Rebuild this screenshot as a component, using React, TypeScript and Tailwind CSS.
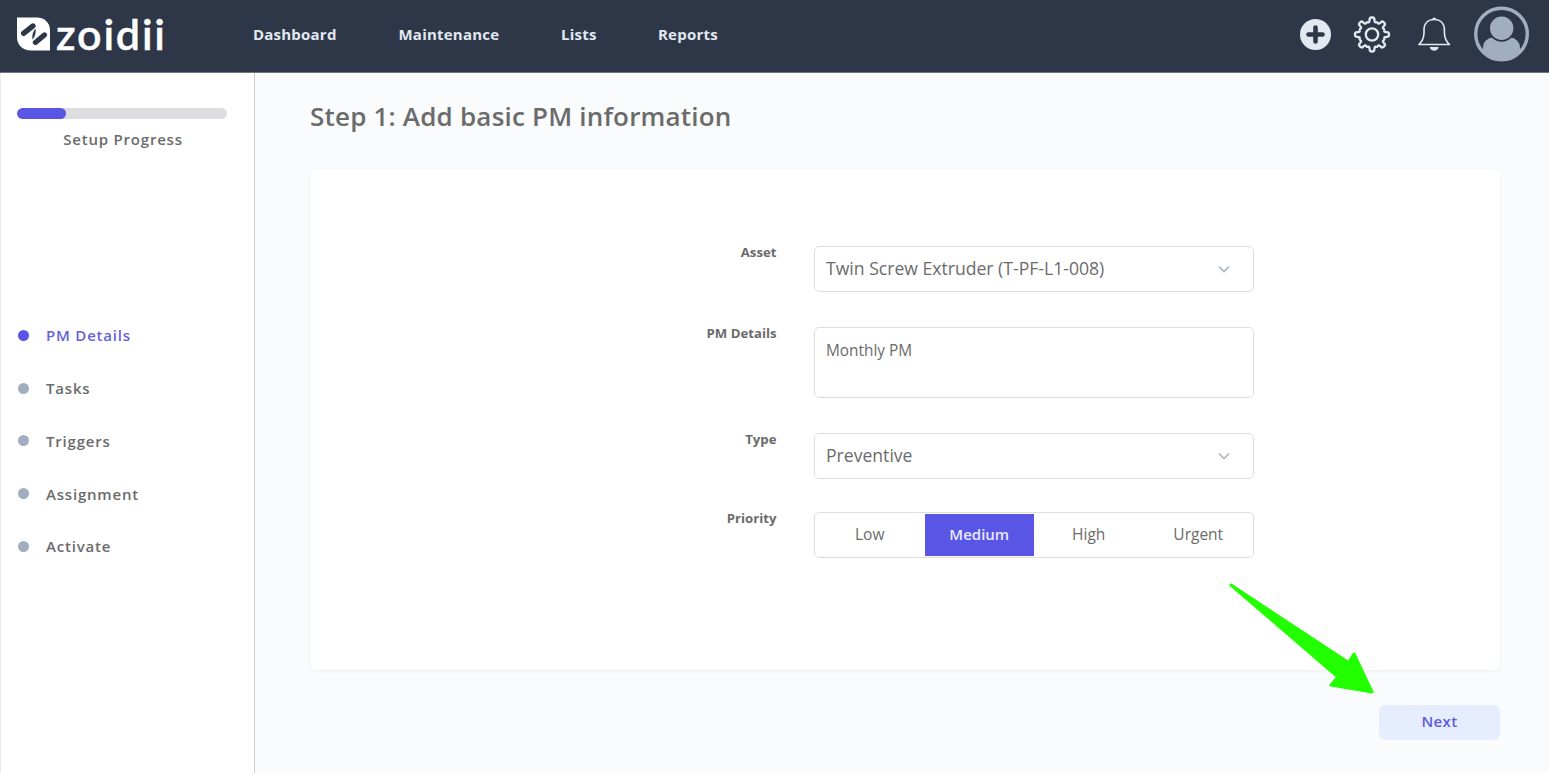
import { useState } from "react"
import type { ReactNode } from "react"
import clsx from "clsx"

const NAV = [
  { label: "Dashboard", gap: "w-[145.5px]" },
  { label: "Maintenance", gap: "w-[162.5px]" },
  { label: "Lists", gap: "w-[97px]" },
  { label: "Reports", gap: "" },
]

const STEPS = ["PM Details", "Tasks", "Triggers", "Assignment", "Activate"]
const PRIORITIES = ["Low", "Medium", "High", "Urgent"]

export default function App() {
  return (
    <div className="relative flex h-[773px] w-[1549px] flex-col overflow-hidden bg-[#f9fbfd] font-['Open_Sans','Noto_Sans',sans-serif] text-[#6b6b6b]">
      <Header />
      <div className="flex min-h-0 flex-1">
        <Sidebar />
        <main className="flex flex-1 flex-col pl-[55px] pr-[49px]">
          <h1 className="mt-[25px] h-9 text-[26px] font-semibold leading-9 tracking-[0.2px]">
            Step 1: Add basic PM information
          </h1>
          <DetailsForm />
          <button className="mt-[35px] h-[35px] w-[121px] self-end rounded-md bg-[#e6edff] pb-0.5 text-[15px] font-semibold tracking-[0.4px] text-[#5f5bdb]">
            Next
          </button>
        </main>
      </div>
      <PointerArrow />
    </div>
  )
}

function Header() {
  return (
    <header className="flex h-[73px] shrink-0 items-start border-b border-[#6f7681] bg-[#2d3748] text-[#e2e8f0]">
      <Logo />
      <nav className="flex h-[68px] items-center pl-[69px] text-[15px] font-bold tracking-[0.22px]">
        {NAV.map(item => (
          <a key={item.label} href="#" className={clsx("shrink-0", item.gap)}>
            {item.label}
          </a>
        ))}
      </nav>
      <HeaderIcons />
    </header>
  )
}

function Logo() {
  return (
    <svg width="184" height="72" viewBox="0 0 184 72" className="shrink-0" aria-label="zoidii">
      <path d="M17 17.5H37C44.5 17.5 50 23 50 30V50.5H31C22.5 50.5 17 45 17 37Z" fill="#fff" />
      <g stroke="#2d3748" strokeWidth="5.2" strokeLinecap="round" fill="none">
        <path d="M23.6 33.4 33 25.9" />
        <path d="M35.4 42.4 44.4 35" />
      </g>
      {/* leaf joining the two bars */}
      <path
        d="M35.6 28C37 32 35.200 37.500 32.400 40.200 31 36.500 32.400 31 35.600 28Z"
        fill="#2d3748"
        stroke="#fff"
        strokeWidth="0.9"
      />
      <text
        x="56"
        y="50"
        textLength="109"
        lengthAdjust="spacing"
        className="fill-white stroke-white stroke-[0.4px] font-['Lato',sans-serif] text-[43px] font-semibold"
      >
        zoidii
      </text>
    </svg>
  )
}

function HeaderIcons() {
  return (
    <svg width="249" height="72" viewBox="1300 0 249 72" className="ml-auto shrink-0" aria-hidden>
      {/* add */}
      <circle cx="1315.5" cy="34.5" r="15.5" fill="#e2e8f0" />
      <path d="M1315.5 27.5v14M1308.5 34.5h14" stroke="#2d3748" strokeWidth="4.6" strokeLinecap="round" />
      {/* settings */}
      <g transform="translate(1372 34.5)" fill="none" stroke="#e2e8f0" strokeWidth="2.3" strokeLinejoin="round">
        <circle r="6.2" />
        <path d={GEAR} />
      </g>
      {/* notifications */}
      <path
        d="M1418.8 44.5c3.5-3 5.2-7 5.2-12V30c0-6.5 4-10.5 10.2-10.5s10.2 4 10.2 10.5v2.5c0 5 1.7 9 5.2 12z"
        fill="none"
        stroke="#e2e8f0"
        strokeWidth="1.6"
        strokeLinejoin="round"
      />
      <path d="M1432.3 19.3a1.9 1.9 0 0 1 3.8 0z" fill="#e2e8f0" />
      <path d="M1429.7 47h9c-.6 2.5-2.3 3.7-4.5 3.7s-3.9-1.2-4.5-3.7z" fill="#e2e8f0" />
      {/* account */}
      <clipPath id="avatar">
        <circle cx="1501.5" cy="34" r="26" />
      </clipPath>
      <g clipPath="url(#avatar)" fill="#a0aec0">
        <rect x="1483" y="37.5" width="37" height="36" rx="10" />
        <circle cx="1501.7" cy="28.2" r="12.6" stroke="#2d3748" strokeWidth="1.8" />
      </g>
      <circle cx="1501.5" cy="34" r="25.8" fill="none" stroke="#a0aec0" strokeWidth="3.4" />
    </svg>
  )
}

// Eight rounded teeth, centred on 0,0.
const GEAR = buildGear(8, 12.8, 17)

function buildGear(teeth: number, inner: number, outer: number) {
  const step = (Math.PI * 2) / teeth
  const at = (r: number, a: number) => `${(r * Math.sin(a)).toFixed(2)} ${(-r * Math.cos(a)).toFixed(2)}`
  let d = ""
  for (let i = 0; i < teeth; i++) {
    const a = i * step
    d += `${i === 0 ? "M" : "L"}${at(outer - 2, a - step * 0.2)}`
    d += `Q${at(outer, a - step * 0.18)} ${at(outer, a - step * 0.05)}`
    d += `L${at(outer, a + step * 0.05)}Q${at(outer, a + step * 0.18)} ${at(outer - 2, a + step * 0.2)}`
    d += `Q${at(inner - 0.8, a + step * 0.28)} ${at(inner + 0.1, a + step * 0.38)}`
    d += `Q${at(inner + 0.9, a + step * 0.5)} ${at(inner + 0.1, a + step * 0.62)}`
    d += `Q${at(inner - 0.8, a + step * 0.72)} ${at(outer - 2, a + step * 0.8)}`
  }
  return `${d}Z`
}

function Sidebar() {
  return (
    <aside className="w-[255px] shrink-0 border-l border-r border-l-[#ededed] border-r-[#cbcccd] bg-white text-[15px] font-semibold tracking-[0.8px]">
      <div className="ml-4 mt-[34.5px] h-[11px] w-[210px] overflow-hidden rounded-full bg-[#dddddf]">
        <div className="h-full w-[49px] rounded-full bg-[#5956e6]" />
      </div>
      <p className="ml-[17px] mt-[10.5px] w-[210px] text-center leading-5">Setup Progress</p>
      <ul className="mt-[160px] pl-[17px]">
        {STEPS.map((step, i) => (
          <li key={step} className="flex h-[52.8px] items-center">
            <span className={clsx("size-[11px] rounded-full", i === 0 ? "bg-[#5956e6]" : "bg-[#a0aec0]")} />
            <span className={clsx("ml-[17px]", i === 0 && "text-[#6562d8]")}>{step}</span>
          </li>
        ))}
      </ul>
    </aside>
  )
}

function DetailsForm() {
  return (
    <section className="mt-[35px] flex h-[501px] shrink-0 flex-col rounded-md bg-white pt-[77px] shadow-[0_1px_3px_rgba(0,0,0,0.06)]">
      <Row label="Asset" className="mb-[35px]">
        <Select value="Twin Screw Extruder (T-PF-L1-008)" />
      </Row>
      <Row label="PM Details" className="mb-[35px]">
        <div className="h-[71px] w-[440px] rounded-[5px] border border-[#dcdfe2] px-[11px] pt-[11px] text-[15.4px] leading-6">
          Monthly PM
        </div>
      </Row>
      <Row label="Type" className="mb-[33px]">
        <Select value="Preventive" />
      </Row>
      <Row label="Priority">
        <PriorityPicker />
      </Row>
    </section>
  )
}

function Row({ label, className, children }: { label: string; className?: string; children: ReactNode }) {
  return (
    <div className={clsx("flex items-start", className)}>
      <label className="mr-[37.5px] w-[466.5px] text-right text-[13.2px] font-bold leading-[12px]">{label}</label>
      {children}
    </div>
  )
}

function Select({ value }: { value: string }) {
  return (
    <button className="flex h-[46px] w-[440px] items-center justify-between rounded-[5px] border border-[#dcdfe2] pl-[11px] pr-[23px] text-left text-[17.6px]">
      <span className="pb-0.5">{value}</span>
      <svg width="12" height="8" viewBox="0 0 12 8" fill="none" stroke="#a9b4c4" strokeWidth="1.6">
        <path d="M1 1.5 6 6.5 11 1.5" />
      </svg>
    </button>
  )
}

function PriorityPicker() {
  const [selected, setSelected] = useState("Medium")

  return (
    <div className="grid h-[46px] w-[440px] grid-cols-4 rounded-[5px] border border-[#dcdfe2] py-px text-[15.5px]">
      {PRIORITIES.map(p => (
        <button
          key={p}
          onClick={() => setSelected(p)}
          className={clsx(p === selected && "bg-[#5956e6] pb-0.5 text-[15px] font-semibold text-[#e9e9fb]")}
        >
          {p}
        </button>
      ))}
    </div>
  )
}

// Callout arrow drawn over the page, pointing at the Next button.
function PointerArrow() {
  return (
    <svg
      className="pointer-events-none absolute left-[1220px] top-[575px]"
      width="160"
      height="125"
      viewBox="1220 575 160 125"
      aria-hidden
    >
      <path
        d="M1231 585 1348.5 662.5 1354 654 1372 692 1331 685 1338 677Z"
        fill="#22ff00"
        stroke="#22ff00"
        strokeWidth="3"
        strokeLinejoin="round"
      />
    </svg>
  )
}
